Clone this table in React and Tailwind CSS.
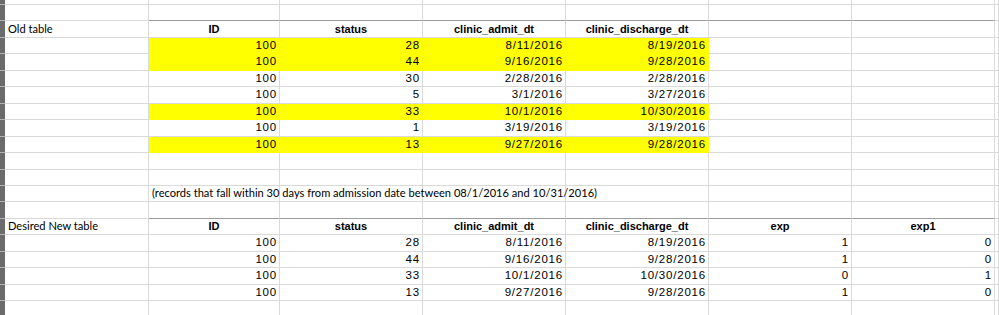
const W = ["w-[144px]", "w-[131px]", "w-[143px]", "w-[143px]", "w-[143px]", "w-[143px]", "w-[143px]", "flex-1"];

const old = [
  ["100", "28", "8/11/2016", "8/19/2016", true],
  ["100", "44", "9/16/2016", "9/28/2016", true],
  ["100", "30", "2/28/2016", "2/28/2016", false],
  ["100", "5", "3/1/2016", "3/27/2016", false],
  ["100", "33", "10/1/2016", "10/30/2016", true],
  ["100", "1", "3/19/2016", "3/19/2016", false],
  ["100", "13", "9/27/2016", "9/28/2016", true],
];

const desired = [
  ["100", "28", "8/11/2016", "8/19/2016", "1", "0"],
  ["100", "44", "9/16/2016", "9/28/2016", "1", "0"],
  ["100", "33", "10/1/2016", "10/30/2016", "0", "1"],
  ["100", "13", "9/27/2016", "9/28/2016", "1", "0"],
];

const num = "font-['Liberation_Sans',sans-serif] text-[11.5px] tracking-[0.8px] justify-end pr-[2px]";
const head = "font-['Liberation_Sans',sans-serif] font-bold text-[11px] justify-center";
const label = "font-['Lato',sans-serif] text-[11.1px] pl-[3px]";

function Cell({ i, yellow, dark, cls = "", children }) {
  const border = yellow ? "border-[#ffff00] bg-[#ffff00]" : "border-[#dadada]";
  return (
    <div
      className={`${W[i]} shrink-0 h-full flex items-center whitespace-nowrap border-r ${border} ${
        dark ? "border-b border-b-[#9b9b9b]" : "border-b"
      } ${cls}`}
    >
      {children}
    </div>
  );
}

function Row({ h = "h-[16.46px]", cells = [], yellow = [], dark = false }) {
  return (
    <div className={`flex ${h} text-black`}>
      <div className="w-[5px] shrink-0 h-full bg-[#6b6b6b] border-b border-[#b4b4b4]" />
      {W.map((_, i) => {
        const c = cells[i];
        return (
          <Cell key={i} i={i} yellow={yellow.includes(i)} dark={dark && i >= 1 && i <= 6} cls={c?.cls}>
            {c?.text}
          </Cell>
        );
      })}
    </div>
  );
}

export default function App() {
  return (
    <div className="w-[999px] h-[315px] overflow-hidden bg-white">
      <Row h="h-[5px]" />
      <Row dark />
      <Row
        cells={[
          { text: "Old table", cls: label },
          { text: "ID", cls: head },
          { text: "status", cls: head },
          { text: "clinic_admit_dt", cls: head },
          { text: "clinic_discharge_dt", cls: head },
        ]}
      />
      {old.map((r, k) => (
        <Row
          key={k}
          yellow={r[4] ? [1, 2, 3, 4] : []}
          cells={[null, ...r.slice(0, 4).map((t) => ({ text: t, cls: num }))]}
        />
      ))}
      <Row />
      <Row />
      <Row
        cells={[
          null,
          {
            text: "(records that fall within 30 days from admission date between 08/1/2016 and 10/31/2016)",
            cls: `${label} overflow-visible relative z-10`,
          },
        ]}
      />
      <Row dark />
      <Row
        cells={[
          { text: "Desired New table", cls: label },
          { text: "ID", cls: head },
          { text: "status", cls: head },
          { text: "clinic_admit_dt", cls: head },
          { text: "clinic_discharge_dt", cls: head },
          { text: "exp", cls: head },
          { text: "exp1", cls: head },
        ]}
      />
      {desired.map((r, k) => (
        <Row key={k} cells={[null, ...r.map((t) => ({ text: t, cls: num }))]} />
      ))}
      <Row h="h-[20px]" />
    </div>
  );
}
